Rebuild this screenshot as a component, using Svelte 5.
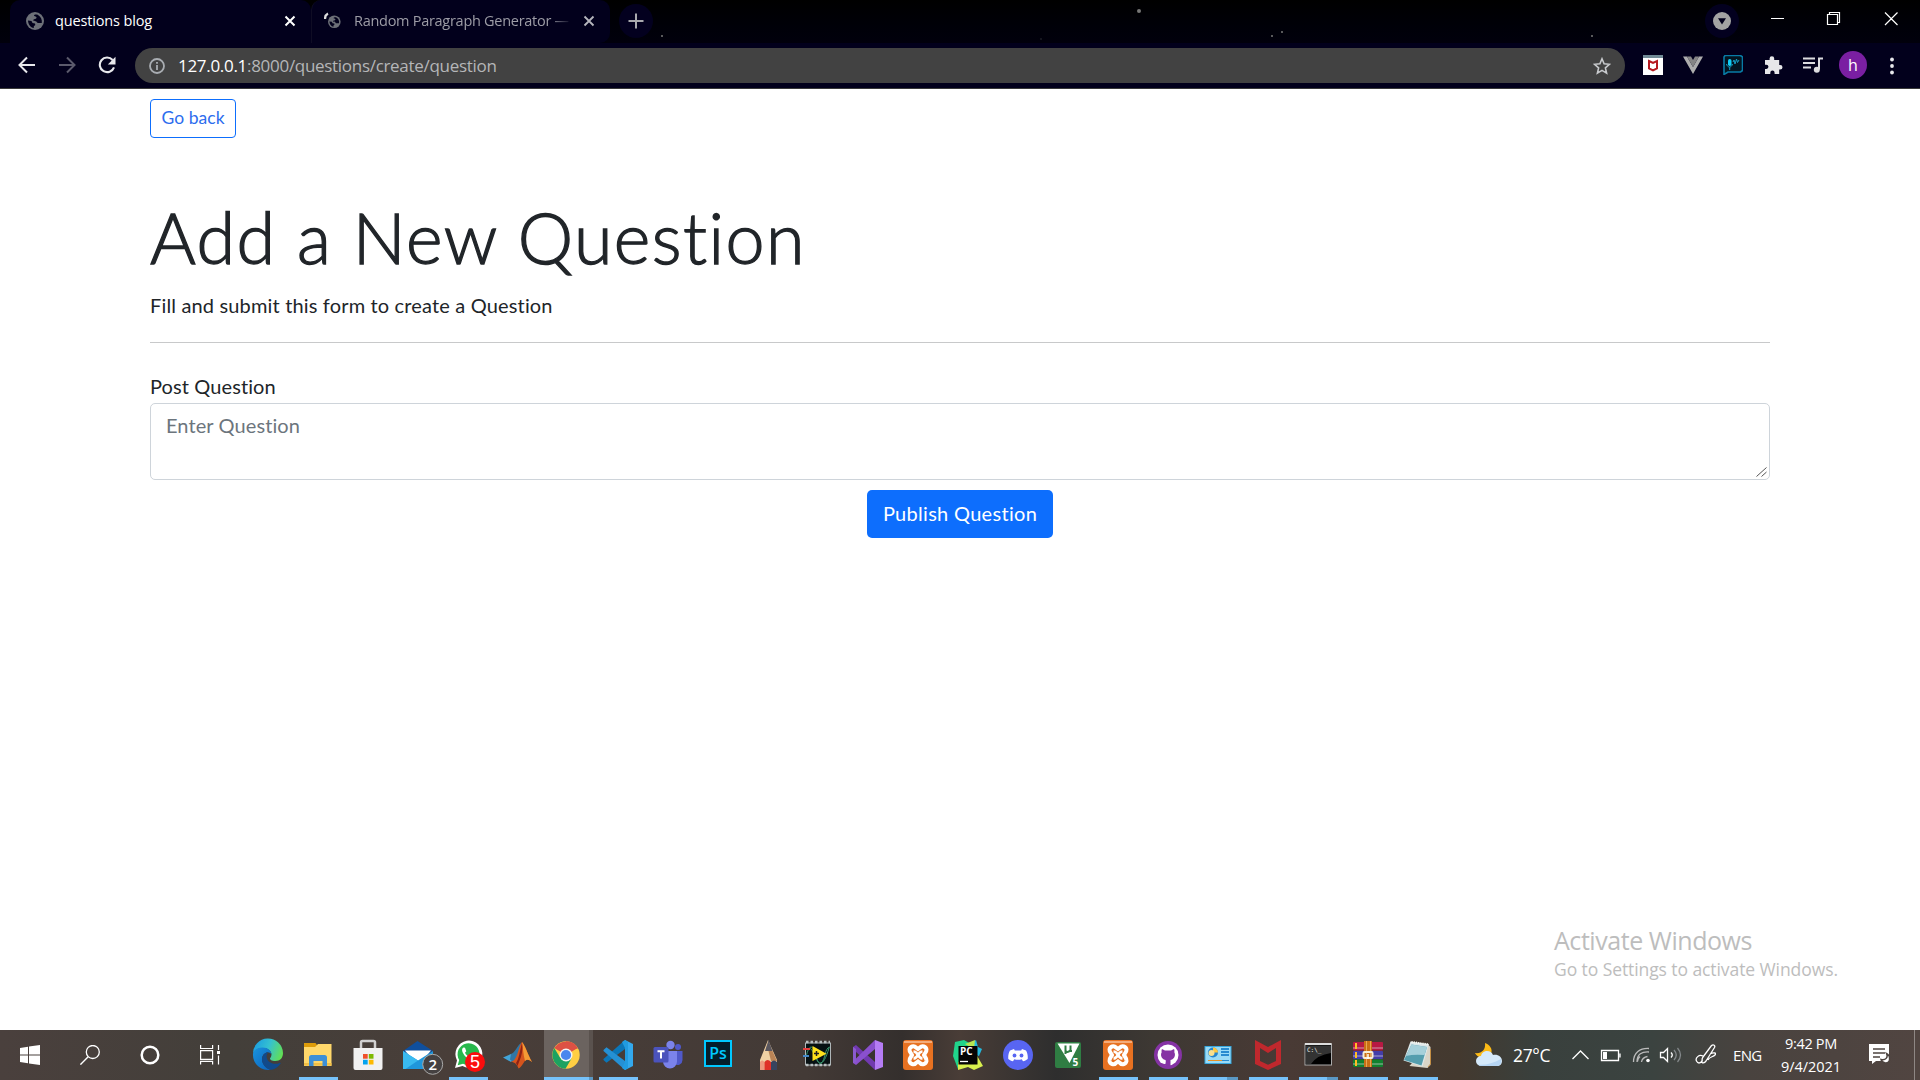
<script>
  const apps = [
    { name: 'edge' },
    { name: 'explorer', run: 'one' },
    { name: 'store' },
    { name: 'mail' },
    { name: 'whatsapp', run: 'one' },
    { name: 'matlab' },
    { name: 'chrome', run: 'active' },
    { name: 'vscode', run: 'one' },
    { name: 'teams' },
    { name: 'photoshop' },
    { name: 'pencil' },
    { name: 'labview' },
    { name: 'visualstudio' },
    { name: 'xampp' },
    { name: 'pycharm' },
    { name: 'discord' },
    { name: 'keil' },
    { name: 'xampp', run: 'one' },
    { name: 'github', run: 'one' },
    { name: 'panel', run: 'many' },
    { name: 'mcafee', run: 'one' },
    { name: 'cmd', run: 'many' },
    { name: 'winrar', run: 'one' },
    { name: 'notepad', run: 'one' }
  ];
</script>

{#snippet globe()}
  <circle cx="9" cy="9" r="9" fill="#6d7078" />
  <path d="M2 8.500l3.500.5 1 2 2.500.5.3 1.500-1.500 1.300V16C4.500 15.500 2.200 12.500 2 8.500zM8 3.500c.3 1 1.500.8 2.300 1.500.8.8-.2 2-1.300 2-1.200 0-2 .8-1.500 1.700.5.600 2 .1 2.800.9.6.6.8 1.400 1.700 1.400h3.800c.5-3.500-1-6.500-3.800-8C10.800 2.200 8 2.500 8 3.500z" fill="#02001c" />
{/snippet}

{#snippet appIcon(name)}
  <svg class="app-icon" width="32" height="32" viewBox="0 0 32 32">
    {#if name === 'edge'}
      <defs>
        <linearGradient id="edgeTop" x1="0" x2="1" y1=".3" y2=".6"><stop offset="0" stop-color="#1b9de2" /><stop offset=".5" stop-color="#35c1d0" /><stop offset="1" stop-color="#62df55" /></linearGradient>
        <linearGradient id="edgeLow" x1="0" x2="1" y1="0" y2="1"><stop offset="0" stop-color="#1a93dd" /><stop offset="1" stop-color="#0b62bd" /></linearGradient>
      </defs>
      <path d="M1 15A15 15 0 0 1 31 14c0 5-3 8-7.500 8-4 0-5.500-1.500-5.500-2.500 0-.8 1.500-1.500 1.500-4C19.500 12 16 9 11 9 6 9 2 11.500 1 15z" fill="url(#edgeTop)" />
      <path d="M1 15C1.500 11 5.500 8.500 10.500 8.500c5.500 0 9 3.500 9 7-1-1.500-3-2.500-5-2-3.500 1-5.500 5-4 9.500 1 3.500 4.500 7 8.500 7.600A15 15 0 0 1 1 15z" fill="url(#edgeLow)" />
      <path d="M14.500 13.500c-3.500 1.500-5.500 5.500-4 10 1.500 4 5 7 9 7.200 4-.7 7.200-3 9-6 .4-.7-.2-1.100-.9-.8-6 2.600-13-.8-13-6.400 0-1.600.5-3 1.900-4z" fill="#114a8b" />
    {:else if name === 'explorer'}
      <path d="M2 4h11.500l1.500 2v6H2z" fill="#dd9b09" />
      <path d="M2 8h11l3-3h13.500v22H2z" fill="#ffd86b" />
      <path d="M2 24h27.500v2.600H2z" fill="#f2bf45" />
      <path d="M7 27V18.500a2.500 2.500 0 0 1 2.500-2.500h13a2.500 2.500 0 0 1 2.500 2.500V27h-4.500v-5h-9v5z" fill="#3d8fd6" />
    {:else if name === 'store'}
      <path d="M9 10V3.500a1.500 1.500 0 0 1 1.500-1.500h11A1.500 1.500 0 0 1 23 3.500V10" fill="none" stroke="#d0d0d0" stroke-width="2.500" />
      <path d="M1.500 9h29v20a2 2 0 0 1-2 2h-25a2 2 0 0 1-2-2z" fill="#f1f1f1" />
      <path d="M11 15h4.700v4.700H11z" fill="#f0502a" /><path d="M16.800 15h4.700v4.700h-4.700z" fill="#7eb900" />
      <path d="M11 20.800h4.700v4.700H11z" fill="#04a3ee" /><path d="M16.800 20.800h4.700v4.700h-4.700z" fill="#fdb900" />
    {:else if name === 'mail'}
      <path d="M1 12 15.500 2 31 12l-15 10z" fill="#0f4f9d" />
      <path d="M3 11.500h26L22 20l-6 2-7-3z" fill="#fff" />
      <path d="M1 12l15 9.500L31 12v17a1 1 0 0 1-1 1H2a1 1 0 0 1-1-1z" fill="#1f97dc" />
      <path d="M1 12l15 9.500L3.500 30H1z" fill="#39baf0" />
      <circle cx="30.700" cy="25.300" r="10" fill="#454141" stroke="#aaa" stroke-width="1" />
      <text x="30.700" y="30.700" class="badge bold">2</text>
    {:else if name === 'whatsapp'}
      <path d="M3 29l2-7.500A13.500 13.500 0 1 1 10.500 27z" fill="#fff" />
      <path d="M5.700 26.300l1.500-5.300A11 11 0 1 1 11 24.700z" fill="#28b84c" />
      <path d="M11.500 8.500c-2 1-1.500 3.500-.5 5.500 1.500 3 4 5.500 7 6.500 2 .7 4 0 4-2.500l-3-1.600-1.500 1.700c-2-.8-3.500-2.300-4.500-4.300l1.300-1.600-1.300-3.500z" fill="#fff" />
      <circle cx="23" cy="23" r="10" fill="#fb0d0d" />
      <text x="23" y="29" class="badge">5</text>
    {:else if name === 'matlab'}
      <path d="M1 18.500l8-3.500 4 4-4 4z" fill="#42a5d9" />
      <path d="M9 15c4-1 6-8 10-11l-2 14-6 5-3-2.500z" fill="#3176a5" />
      <path d="M9 23c3-1 4-3 6-7 1.500-4 3-11 5-13 3 3 6 13 10 20-4-3-6-3-8.500 1-2 3-3 4.500-5 5.500-1.500-4-3.500-6.500-7.500-6.500z" fill="#d5541d" />
      <path d="M20 3c3 3 6 13 10 20-3-2.500-5-3-7-1C21 15 21 8 20 3z" fill="#f39a35" />
      <path d="M14 24c3-4 4-13 6-20 1 6 0 13-3 19l-1.500 4z" fill="#8d2216" />
    {:else if name === 'chrome'}
      <circle cx="16" cy="16" r="13.700" fill="#ffce43" />
      <path d="M16 16L4.300 9A13.700 13.700 0 0 1 27.700 9z" fill="#dd5144" /><path d="M16 9.500h11.900A13 13 0 0 0 16 2.300z" fill="#dd5144" />
      <path d="M4.300 9A13.700 13.700 0 0 0 15.500 29.700L21.500 19.500 10.300 19z" fill="#1ca261" />
      <circle cx="16" cy="16" r="6.500" fill="#f4f4f4" /><circle cx="16" cy="16" r="5.100" fill="#4a86ee" />
    {:else if name === 'vscode'}
      <path d="M23 1l8 4v22l-8 4z" fill="#33a9ed" />
      <path d="M1.500 21l3 2.700L23 10V1L1.500 20z" fill="#0b76b8" />
      <path d="M1.500 11l3-2.700L23 22v9L1.500 12z" fill="#2590d4" />
      <path d="M23 1l-3 2 3 6v14l-3 6 3 2 3-2V3z" fill="#219be0" />
    {:else if name === 'teams'}
      <circle cx="26" cy="8" r="3" fill="#5059c9" /><circle cx="18.500" cy="6" r="4.200" fill="#7b83eb" />
      <path d="M23 12h7.500v9a5 5 0 0 1-8 4z" fill="#5059c9" />
      <path d="M11 12h14v10.500a7 7 0 0 1-14 0z" fill="#7b83eb" />
      <rect x="1.500" y="8" width="15" height="15.500" rx="1.500" fill="#4b53bc" />
      <path d="M5.500 12.200h7M9 12v7.500" stroke="#fff" stroke-width="2" />
    {:else if name === 'photoshop'}
      <rect x="3" y="2" width="26" height="25" fill="#041e2b" stroke="#00c8ff" stroke-width="2" />
      <text x="16" y="19.500" class="ps">Ps</text>
    {:else if name === 'pencil'}
      <path d="M16 1l-8 20v10h17V21z" fill="#efd1a4" />
      <path d="M16.500 1l-3.500 11h7.500z" fill="#59565e" />
      <path d="M16.500 12h4L25 22h-6z" fill="#ba8456" />
      <path d="M8 23q2-3 4.500 0V31H8z" fill="#ed987e" /><path d="M12.500 23q3-4 6.500 0v8h-6.500z" fill="#df3028" /><path d="M19 23q3-3 6 0v8h-6z" fill="#37445f" />
    {:else if name === 'labview'}
      <rect x="3.500" y="4" width="25" height="22" fill="#071113" stroke="#aeb6b8" stroke-width="1" />
      <path d="M4 3h24M4 26h24" stroke="#b8bfc0" stroke-width="2.500" stroke-dasharray="2.500 2" />
      <path d="M4 18C7 5 11 5 14 17s8 9 13-8M5 11c6-8 9 16 14 13s3-15 9-16" stroke="#3b9970" fill="none" />
      <path d="M1 10h7" stroke="#e43e3c" stroke-width="2" /><path d="M1 17h6" stroke="#4388c8" stroke-width="2" />
      <path d="M10.500 7l14 7.800-14 7.200z" fill="#ffe21c" /><path d="M12 14.500h5M14.500 12v5" stroke="#222" stroke-width="1.500" />
    {:else if name === 'visualstudio'}
      <path d="M23 1l8 3v24l-8 3z" fill="#b57cf5" />
      <path d="M1 8l3-2 19 17v8L1 10z" fill="#7139b0" />
      <path d="M1 24l3 2L23 10V1L4 19.500V12L1 8z" fill="#8a50ce" />
      <path d="M1 8l3 2v13l-3 1z" fill="#8b5bd0" />
    {:else if name === 'xampp'}
      <rect x="1" y="1" width="30" height="30" rx="3" fill="#e77121" />
      <path d="M2 2h28v2H2z" fill="#f4ac7a" />
      <path d="M7.500 10.500a3.800 3.800 0 0 1 6.500-2l2 1.500 2-1.500a3.800 3.800 0 0 1 6.500 2c.3 2.500-2 4-2.500 5.500.500 1.500 2.800 3 2.500 6a3.800 3.800 0 0 1-6.500 2l-2-1.500-2 1.500a3.800 3.800 0 0 1-6.500-2c-.3-3 2-4.500 2.500-6-.5-1.500-2.800-3-2.500-5.500z" fill="none" stroke="#fff" stroke-width="4" />
      <path d="M11.500 12.500c5 0 4 7 9 7M20.500 12.500c-5 0-4 7-9 7" fill="none" stroke="#fff" stroke-width="2.600" />
    {:else if name === 'pycharm'}
      <path d="M1 17L3 3l9-2 7 4-5 23-8 2z" fill="#20d48b" /><path d="M18 5l6-4 2 7 4 2-3 7-12-4z" fill="#24b8dd" /><path d="M13 5l10-4-1 9z" fill="#b7e650" /><path d="M6 23l18-8 7 12-9 4-6-3-10 3z" fill="#d9f04e" />
      <rect x="6.500" y="7" width="19" height="18.500" fill="#050505" /><text x="8" y="16" class="pc">PC</text><path d="M8 22.500h8" stroke="#fff" stroke-width="1.300" />
    {:else if name === 'discord'}
      <circle cx="16" cy="16" r="15" fill="#5865f2" />
      <path d="M12 10l-4 1.500C6.500 14 6 17 6.300 20c1.500 1.200 3 2 4.700 2.300l1.300-2c2.400.7 5 .7 7.400 0l1.300 2c1.700-.3 3.200-1.100 4.700-2.300.3-3-.2-6-1.700-8.500L20 10l-.8 1.500h-6.400z" fill="#fff" />
      <circle cx="12.500" cy="16.500" r="1.900" fill="#5865f2" /><circle cx="19.500" cy="16.500" r="1.900" fill="#5865f2" />
    {:else if name === 'keil'}
      <rect x="3" y="3" width="26" height="26" rx="2" fill="#2f7d43" />
      <path d="M5.500 4.500h22L17.500 24z" fill="#fff" /><path d="M13.500 15V6.500M13.500 12c1.500 1.500 4 1 5-1V6.500V12h1.500" stroke="#2f7d43" stroke-width="2" fill="none" />
      <text x="20.500" y="27" class="five">5</text>
    {:else if name === 'github'}
      <circle cx="16" cy="16" r="14" fill="#8533a4" />
      <circle cx="16" cy="16" r="10.500" fill="#fff" />
      <path d="M10 10l3 1.500h6L22 10c.6 1 .5 2.500.3 3.300C23.500 15 23.500 20 18.500 21v8h-5v-2.500c-3 .8-4-1.500-5-2.500 2-.3 2.500 1.500 5 .8l.3-2.800-.3-1C8.500 20 8.500 15 9.700 13.300 9.500 12.500 9.400 11 10 10z" fill="#8533a4" />
    {:else if name === 'panel'}
      <rect x="3" y="7.500" width="26" height="17" fill="#9adbf7" stroke="#37a7de" />
      <circle cx="11" cy="13.500" r="5" fill="#2485cf" /><path d="M11 13.500v-5a5 5 0 0 1 5 5z" fill="#ffc63d" /><circle cx="9.500" cy="14" r="3" fill="#f8df8f" />
      <path d="M19 10h8M19 13h8M19 16h8" stroke="#278ad0" stroke-width="2" /><path d="M6 21.500h14" stroke="#e79126" /><path d="M20 21.500h7" stroke="#278ad0" />
    {:else if name === 'mcafee'}
      <path d="M3 1l13 7L29 1v24l-13 6-13-6zM8 9v13l8 3.800 8-3.800V9l-8 5z" fill="#c0282d" fill-rule="evenodd" />
    {:else if name === 'cmd'}
      <rect x="3" y="5" width="26.500" height="21" fill="#000" stroke="#aaa" /><path d="M3 5h26.500" stroke="#ddd" stroke-width="2" /><path d="M4 6.500h25V14Q15 16 9 25H4z" fill="#333" /><text x="5" y="13" class="prompt">C:\_</text>
    {:else if name === 'winrar'}
      <rect x="1" y="3" width="30" height="8.500" rx="1" fill="#b71943" /><rect x="1" y="12" width="30" height="8" rx="1" fill="#433da8" /><rect x="1" y="20.500" width="30" height="7.500" rx="1" fill="#11812f" />
      <path d="M1 9h30M1 17h30M1 25h30" stroke="#d8d2dc" stroke-width=".7" /><path d="M4 4v6M4 13v6M4 21v6" stroke="#ffbe25" stroke-width="2" />
      <path d="M12 2h8v26h-8z" fill="#c96f16" /><path d="M14 2h1v26h-1zM18 2h1v26h-1z" fill="#e7a552" /><rect x="11.500" y="13" width="9" height="6" rx="1" fill="none" stroke="#f4eed8" stroke-width="2" /><path d="M16 15v5" stroke="#fff" stroke-width="1.500" />
    {:else if name === 'notepad'}
      <g transform="translate(-1.500 0)">
        <path d="M9 27l18 2 3-3V8l-3-3z" fill="#d9d5c8" />
        <path d="M10 2.500L28.500 5 22 27.500 3 21.500z" fill="#dce7e9" />
        <path d="M11 5.500L26.500 8 21 26.500 3.500 21z" fill="#559eae" /><path d="M11 5.500L26.500 8 24 16Q13 15 5.500 17z" fill="#a6d0da" />
        <path d="M11 3l16.500 2.300" stroke="#f8f8f0" stroke-width="2" stroke-dasharray="1.200 1" /><path d="M30 10v15l-2.500 3" stroke="#c48f45" fill="none" />
      </g>
    {/if}
  </svg>
{/snippet}

<div class="screen">
  <header class="tabstrip">
    <div class="tab first">
      <svg width="18" height="18" viewBox="0 0 18 18">{@render globe()}</svg>
      <span class="tab-title">questions blog</span>
      <svg class="x" width="12" height="12" viewBox="0 0 12 12"><path d="M1.500 1.500l9 9M10.500 1.500l-9 9" stroke="#fff" stroke-width="2" /></svg>
    </div>
    <div class="tab second">
      <svg width="17" height="18" viewBox="0 0 17 18"><path d="M1 7C1 4 1.800 2.600 4 1.500" stroke="#ddd" stroke-width="2.200" fill="none" /><g transform="translate(4 3.500) scale(.7)">{@render globe()}</g></svg>
      <span class="tab-title faded">Random Paragraph Generator —</span>
      <svg class="x" width="12" height="12" viewBox="0 0 12 12"><path d="M1.500 1.500l9 9M10.500 1.500l-9 9" stroke="#b6b6bd" stroke-width="1.800" /></svg>
    </div>
    <div class="new-tab"><svg width="16" height="16" viewBox="0 0 16 16"><path d="M8 .5v15M.5 8h15" stroke="#a9a9ae" stroke-width="2" /></svg></div>
    <svg class="stars" width="1000" height="43" viewBox="0 0 1000 43"><g fill="#777"><circle cx="486" cy="11" r="2" /><circle cx="9" cy="36" r="1" /><circle cx="619" cy="36" r="1" /><circle cx="629" cy="32" r="1" /><circle cx="939" cy="36" r="1" /><circle cx="388" cy="39" r=".7" opacity=".5" /></g></svg>
    <div class="tab-search"><svg width="18" height="18" viewBox="0 0 18 18"><circle cx="9" cy="9" r="9" fill="#a3a3a3" /><path d="M5 6.300h8L9 12.500z" fill="#02001c" /></svg></div>
    <svg class="window-controls" width="130" height="36" viewBox="0 0 130 36"><g fill="none" stroke="#fff" stroke-width="1.200"><path d="M2 18.500h13M58.500 14.500h10v10h-10zM60.500 14.500v-2h10v10h-2M116 12.500l12.500 12.500M128.500 12.500L116 25" /></g></svg>
  </header>

  <nav class="toolbar">
    <div class="nav-icons">
      <svg width="18" height="18" viewBox="0 0 18 18"><path d="M17 9H2M9 1.500L1.500 9 9 16.500" fill="none" stroke="#e8e8ec" stroke-width="2" /></svg>
      <svg width="18" height="18" viewBox="0 0 18 18"><path d="M1 9h15M9 1.500L16.500 9 9 16.500" fill="none" stroke="#5b5a6c" stroke-width="2" /></svg>
      <svg width="18" height="18" viewBox="0 0 18 18"><path d="M14.600 4A7.300 7.300 0 1 0 16 11.300" fill="none" stroke="#e8e8ec" stroke-width="2.100" /><path d="M17.500.8v7.700H9.800z" fill="#e8e8ec" /></svg>
    </div>
    <div class="omnibox">
      <svg width="16" height="16" viewBox="0 0 16 16"><circle cx="8" cy="8" r="7" fill="none" stroke="#a9adb2" stroke-width="1.800" /><path d="M8 7v5M8 4v1.800" stroke="#a9adb2" stroke-width="1.800" /></svg>
      <span class="url"><b>127.0.0.1</b>:8000/questions/create/question</span>
      <svg width="18" height="18" viewBox="0 0 18 18"><path d="M9 1.800l2.100 5 5.400.5-4.100 3.600 1.200 5.300L9 13.400l-4.600 2.800 1.200-5.300-4.100-3.600 5.400-.5z" fill="none" stroke="#c7c9cc" stroke-width="1.600" /></svg>
    </div>
    <div class="extensions">
      <svg width="20" height="20" viewBox="0 0 20 20"><path d="M0 0h20v20H0z" fill="#fff" /><path d="M0 0h20v3H0z" fill="#718b96" /><path d="M6 6l4 2 4-2v7.500L10 15.500l-4-2z" fill="none" stroke="#b5191f" stroke-width="2" /></svg>
      <svg width="20" height="20" viewBox="0 0 20 20"><path d="M0 1.500h4L10 12l6-10.500h4L10 19z" fill="#adadad" /><path d="M4 1.500h4l2 3.500 2-3.500h4L10 12z" fill="#858585" /></svg>
      <svg width="20" height="20" viewBox="0 0 20 20"><path d="M1 19.500V2l1-1.500h15.500L19.500 2v13.500l-2 1.500H5z" fill="#031521" stroke="#087ba5" stroke-width="1.600" /><rect x="5" y="4" width="3.500" height="7" rx="1.700" fill="#10cef5" /><path d="M3.500 9c1 4 5 4 6 0M6.700 12v3M10 7l1-2 1 4 1.500-5 1 3.500L16 5" stroke="#159fc5" fill="none" /></svg>
      <svg width="20" height="20" viewBox="0 0 20 20"><path d="M2 5h4.600V3.500a2.300 2.300 0 0 1 4.600 0V5h5v5h1a2.300 2.300 0 0 1 0 4.600h-1V19h-4.600v-1.300a2 2 0 0 0-4.300 0V19H2v-5h1.300a2 2 0 0 0 0-4.300H2z" fill="#e7e7e9" /></svg>
      <svg width="20" height="20" viewBox="0 0 20 20"><path d="M0 3.500h12M0 8h12M0 12.500h8" stroke="#dcdcdf" stroke-width="1.900" /><path d="M20 3.500h-4v11" fill="none" stroke="#dcdcdf" stroke-width="2" /><circle cx="13.800" cy="14.800" r="3" fill="#dcdcdf" /></svg>
    </div>
    <div class="avatar">h</div>
    <svg class="menu" width="4" height="18" viewBox="0 0 4 18"><g fill="#e8e8ec"><circle cx="2" cy="2.500" r="1.900" /><circle cx="2" cy="9" r="1.900" /><circle cx="2" cy="15.500" r="1.900" /></g></svg>
  </nav>

  <main>
    <button class="back">Go back</button>
    <h1>Add a New Question</h1>
    <p class="sub">Fill and submit this form to create a Question</p>
    <hr />
    <label for="q">Post Question</label>
    <div class="field">
      <textarea id="q" placeholder="Enter Question"></textarea>
      <svg class="grip" width="11" height="10" viewBox="0 0 11 10"><path d="M.5 9.500l10-9M5.500 9.500l5-4.500" stroke="#555" stroke-width="1" /></svg>
    </div>
    <button class="publish">Publish Question</button>
    <aside class="watermark">
      <div class="wm-title">Activate Windows</div>
      <div class="wm-text">Go to Settings to activate Windows.</div>
    </aside>
  </main>

  <footer class="taskbar">
    <div class="system">
      <svg width="20" height="20" viewBox="0 0 20 20"><path d="M0 3l8-1.200v7.700H0zM9 1.600L20 0v9.500H9zM0 10.500h8v7.700L0 17zM9 10.500h11V20L9 18.400z" fill="#fff" /></svg>
      <svg width="20" height="20" viewBox="0 0 20 20"><circle cx="12.800" cy="7" r="6.500" fill="none" stroke="#fff" stroke-width="1.300" /><path d="M8.200 11.700L.4 19.600" stroke="#fff" stroke-width="1.400" /></svg>
      <svg width="20" height="20" viewBox="0 0 20 20"><circle cx="10" cy="10" r="8.300" fill="none" stroke="#fff" stroke-width="2.500" /></svg>
      <svg width="20" height="20" viewBox="0 0 20 20"><path d="M.6 0v3.500h12V0M.6 5.600h12v8.700H.6zM.6 19.600v-3.300h12v3.300M18.500 0v5M18.500 10.500v9" fill="none" stroke="#fff" stroke-width="1.200" /><path d="M17 6h3v3h-3z" fill="#fff" /></svg>
    </div>
    <div class="apps">
      {#each apps as app}
        <div class="app {app.run ?? ''}">{@render appIcon(app.name)}</div>
      {/each}
    </div>
    <div class="weather">
      <svg width="28" height="26" viewBox="0 0 28 26"><path d="M10 1c5 2 8 6 6 11l-9 4C3 15 1 13 0 11c6 1 11-3 10-10z" fill="#fdbb16" /><path d="M6 24a5 5 0 0 1 0-10c1-6 10-7 12-1 5-1 9 2 9 6 0 3-2 5-5 5z" fill="#d5e9fa" /><path d="M3 22.500c6 1 15-1 23-5.500 1 4-1 7-4 7H6c-1 0-2-.5-3-1.500z" fill="#b6d5f3" /></svg>
      <span>27°C</span>
    </div>
    <svg class="tray" width="144" height="24" viewBox="0 0 144 24">
      <g fill="none" stroke="#fff" stroke-width="1.300">
        <path d="M.5 16L8.500 8l8 8" />
        <path d="M29.500 7.500h17v10h-17zM48 10.500v4" />
        <path d="M65.500 18.500c0-2 1-3.700 2.500-5M69.500 19c.5-3 3-5 6-5.500M65 19C65 11 70 8.500 77 9M61.500 19C61.500 9.500 68 5 77 5.500" stroke="#bbb" />
        <path d="M88.500 9.500h3l4-4v13l-4-4h-3zM99 9.500q2.500 2.500 0 5" />
        <path d="M102 7q4.500 5 0 10M105.500 5q6 7 0 14" stroke="#83888a" />
        <path d="M131 14l8.500-11.500c2-1.500 4 0 3 2L134 18c-1.500 2-4.500 3-4 0 0-1 0-3 1-4zM131 13c-4-2-8 2-6.500 5s4.500 2.500 6-1M138 11c4-2 7-1 5 1s-6 2-7 5" />
      </g>
      <path d="M31 9h4v7h-4z" fill="#fff" /><circle cx="76" cy="17.500" r="1.800" fill="#fff" />
    </svg>
    <span class="lang">ENG</span>
    <div class="clock"><span class="time">9:42 PM</span><span class="date">9/4/2021</span></div>
    <svg class="notice" width="22" height="22" viewBox="0 0 22 22"><path d="M0 0h20v17H7l-4 3v-3H0z" fill="#fff" /><path d="M4 5h12M4 9h12M4 13h7" stroke="#4d4440" stroke-width="1.500" /><path d="M17.500 9.500c2 4-1 7-5.500 6 1 4 8 5 8.500 0 .3-2.500-1-5-3-6z" fill="#fff" stroke="#4d4440" stroke-width="1.400" /></svg>
    <span class="peek"></span>
  </footer>
</div>

<style>
  :global(body) { margin: 0; overflow: hidden; }
  .screen { width: 1920px; height: 1080px; display: flex; flex-direction: column; background: #fff; font-family: "Open Sans", "Noto Sans", sans-serif; }
  svg { flex: none; display: block; }
  .tabstrip { height: 43px; flex: none; display: flex; background: linear-gradient(#000 0, #000008 60%, #01000c); padding-left: 10px; }
  .tab { height: 43px; box-sizing: border-box; display: flex; align-items: center; background: #02001c; color: #fff; font-size: 14.500px; white-space: nowrap; }
  .first { width: 301px; padding: 0 15px 1px 16px; border-radius: 10px 10px 0 0; }
  .second { width: 299px; padding: 0 15px 1px 12px; border-radius: 10px 10px 10px 0; color: #9d9ca6; border-left: 1px solid #0f0d24; }
  .tab-title { margin-left: 11px; margin-bottom: 2px; letter-spacing: -.15px; }
  .faded { margin-left: 13px; width: 218px; overflow: hidden; mask-image: linear-gradient(90deg, #000 90%, transparent); letter-spacing: -.28px; }
  .x { margin-left: auto; }
  .new-tab, .tab-search { width: 34px; height: 34px; margin-top: 4px; border-radius: 50%; background: #03001f; display: flex; align-items: center; justify-content: center; flex: none; }
  .new-tab { margin-left: 9px; }
  .tab-search { margin-left: 52px; }
  .window-controls { margin-left: 30px; }
  .toolbar { height: 46px; box-sizing: border-box; flex: none; background: #02001c; border-bottom: 1px solid #3a3a3a; display: flex; align-items: center; padding-left: 18px; }
  .nav-icons { display: flex; gap: 22px; width: 117px; padding-bottom: 1px; }
  .omnibox { width: 1490px; height: 35px; box-sizing: border-box; border-radius: 18px; background: #424242; display: flex; align-items: center; padding: 0 14px; }
  .url { margin-left: 13px; flex: 1; color: #b5b6b8; font-size: 17px; letter-spacing: -.3px; }
  .url b { color: #fff; font-weight: 400; }
  .extensions { display: flex; gap: 20px; margin-left: 18px; padding-bottom: 1px; }
  .avatar { width: 28px; height: 28px; margin: 0 0 1px 16px; border-radius: 50%; background: #7a1fa2; color: #fff; display: flex; align-items: center; justify-content: center; font-size: 16px; }
  .menu { margin-left: 23px; }
  main { height: 941px; flex: none; box-sizing: border-box; display: flex; flex-direction: column; padding: 10px 150px 0; font-family: Lato, sans-serif; color: #212529; }
  main button { font-family: inherit; }
  .back { width: 86px; height: 39px; box-sizing: border-box; border: 1px solid #0d6efd; border-radius: 4px; background: #fff; color: #2d6dee; font-size: 17.500px; letter-spacing: .05px; padding: 0 0 2px; }
  h1 { font-size: 70px; line-height: 84px; font-weight: 300; letter-spacing: 1.450px; margin: 57px 0 0; white-space: nowrap; -webkit-text-stroke: 1.300px #212529; }
  .sub { margin: 11px 0 0; font-size: 20px; line-height: 30px; letter-spacing: .16px; }
  hr { height: 1px; width: 100%; border: 0; background: #c8c9ca; margin: 22px 0 20px; }
  label { margin-top: 8px; font-size: 20px; line-height: 30px; letter-spacing: .1px; }
  .field { position: relative; margin-top: 2px; height: 77px; }
  textarea { display: block; height: 77px; width: 100%; box-sizing: border-box; border: 1px solid #ced4da; border-radius: 5px; padding: 6px 15px; font: 20px/30px Lato, sans-serif; letter-spacing: .1px; background: #fff; overflow: hidden; margin: 0; resize: none; }
  textarea::placeholder { color: #6c757d; opacity: 1; }
  .grip { position: absolute; right: 3px; bottom: 3px; }
  .publish { align-self: center; width: 186px; height: 48px; border: 0; border-radius: 5px; background: #0d6efd; color: #fff; font-size: 20px; letter-spacing: .3px; margin-top: 10px; padding: 0 0 3px; }
  .watermark { margin: auto -150px 45px auto; width: 366px; height: 62px; color: #bdbdbd; font-family: "Open Sans", sans-serif; white-space: nowrap; display: flex; flex-direction: column; }
  .wm-title { font-size: 25px; line-height: 34px; letter-spacing: -.45px; }
  .wm-text { font-size: 17.500px; line-height: 24px; letter-spacing: -.08px; }
  .taskbar { height: 50px; flex: none; display: flex; align-items: center; color: #fff; background: linear-gradient(90deg, #4a403d 0, #433f3a 12%, #493e39 24%, #433a36 42%, #342f2d 47%, #493d37 50%, #2e2e2e 55%, #3d3833 60%, #493a35 67%, #43392f 76%, #39403d 80%, #3b4340 86%, #49433f 91%, #514541 100%); }
  .system { display: flex; gap: 40px; width: 223px; padding-left: 20px; }
  .apps { display: grid; grid-template-columns: repeat(24, 50px); height: 50px; }
  .app { height: 50px; display: flex; align-items: center; justify-content: center; }
  .app-icon { overflow: visible; }
  .one { background: linear-gradient(#76c2fa, #76c2fa) 6px 47px / 39px 3px no-repeat; }
  .many { background: linear-gradient(90deg, #76c2fa 28px, #5a98c4 28px) 6px 47px / 39px 3px no-repeat; }
  .active { background: linear-gradient(90deg, #76c2fa 45px, #5a98c4 45px) 1px 47px / 49px 3px no-repeat, linear-gradient(90deg, #6b635f 45px, #5a524e 45px) 1px 0 / 49px 50px no-repeat; padding-right: 4px; }
  .badge { fill: #fff; font: 18px "Liberation Sans", sans-serif; text-anchor: middle; }
  .bold { font: 600 15px "Open Sans", sans-serif; }
  .ps { fill: #00c8ff; font: 600 16px "Open Sans", sans-serif; text-anchor: middle; }
  .pc { fill: #fff; font: 700 10px "Open Sans", sans-serif; }
  .five { fill: #fff; font: 700 10px "Open Sans", sans-serif; }
  .prompt { fill: #eee; font: 6px "DejaVu Sans Mono", monospace; }
  .weather { display: flex; align-items: center; margin-left: 32px; gap: 10px; width: 97px; font-size: 17.500px; letter-spacing: -.35px; }
  .lang { margin-left: 17px; width: 30px; font-size: 15px; letter-spacing: -.7px; }
  .clock { width: 62px; margin-left: 17px; display: flex; flex-direction: column; align-items: center; font-size: 14.500px; line-height: 23px; letter-spacing: -.35px; white-space: nowrap; }
  .date { letter-spacing: -.05px; }
  .notice { margin-left: 27px; }
  .peek { margin-left: auto; margin-right: 5px; height: 50px; border-left: 1px solid #8e8784; }
</style>
